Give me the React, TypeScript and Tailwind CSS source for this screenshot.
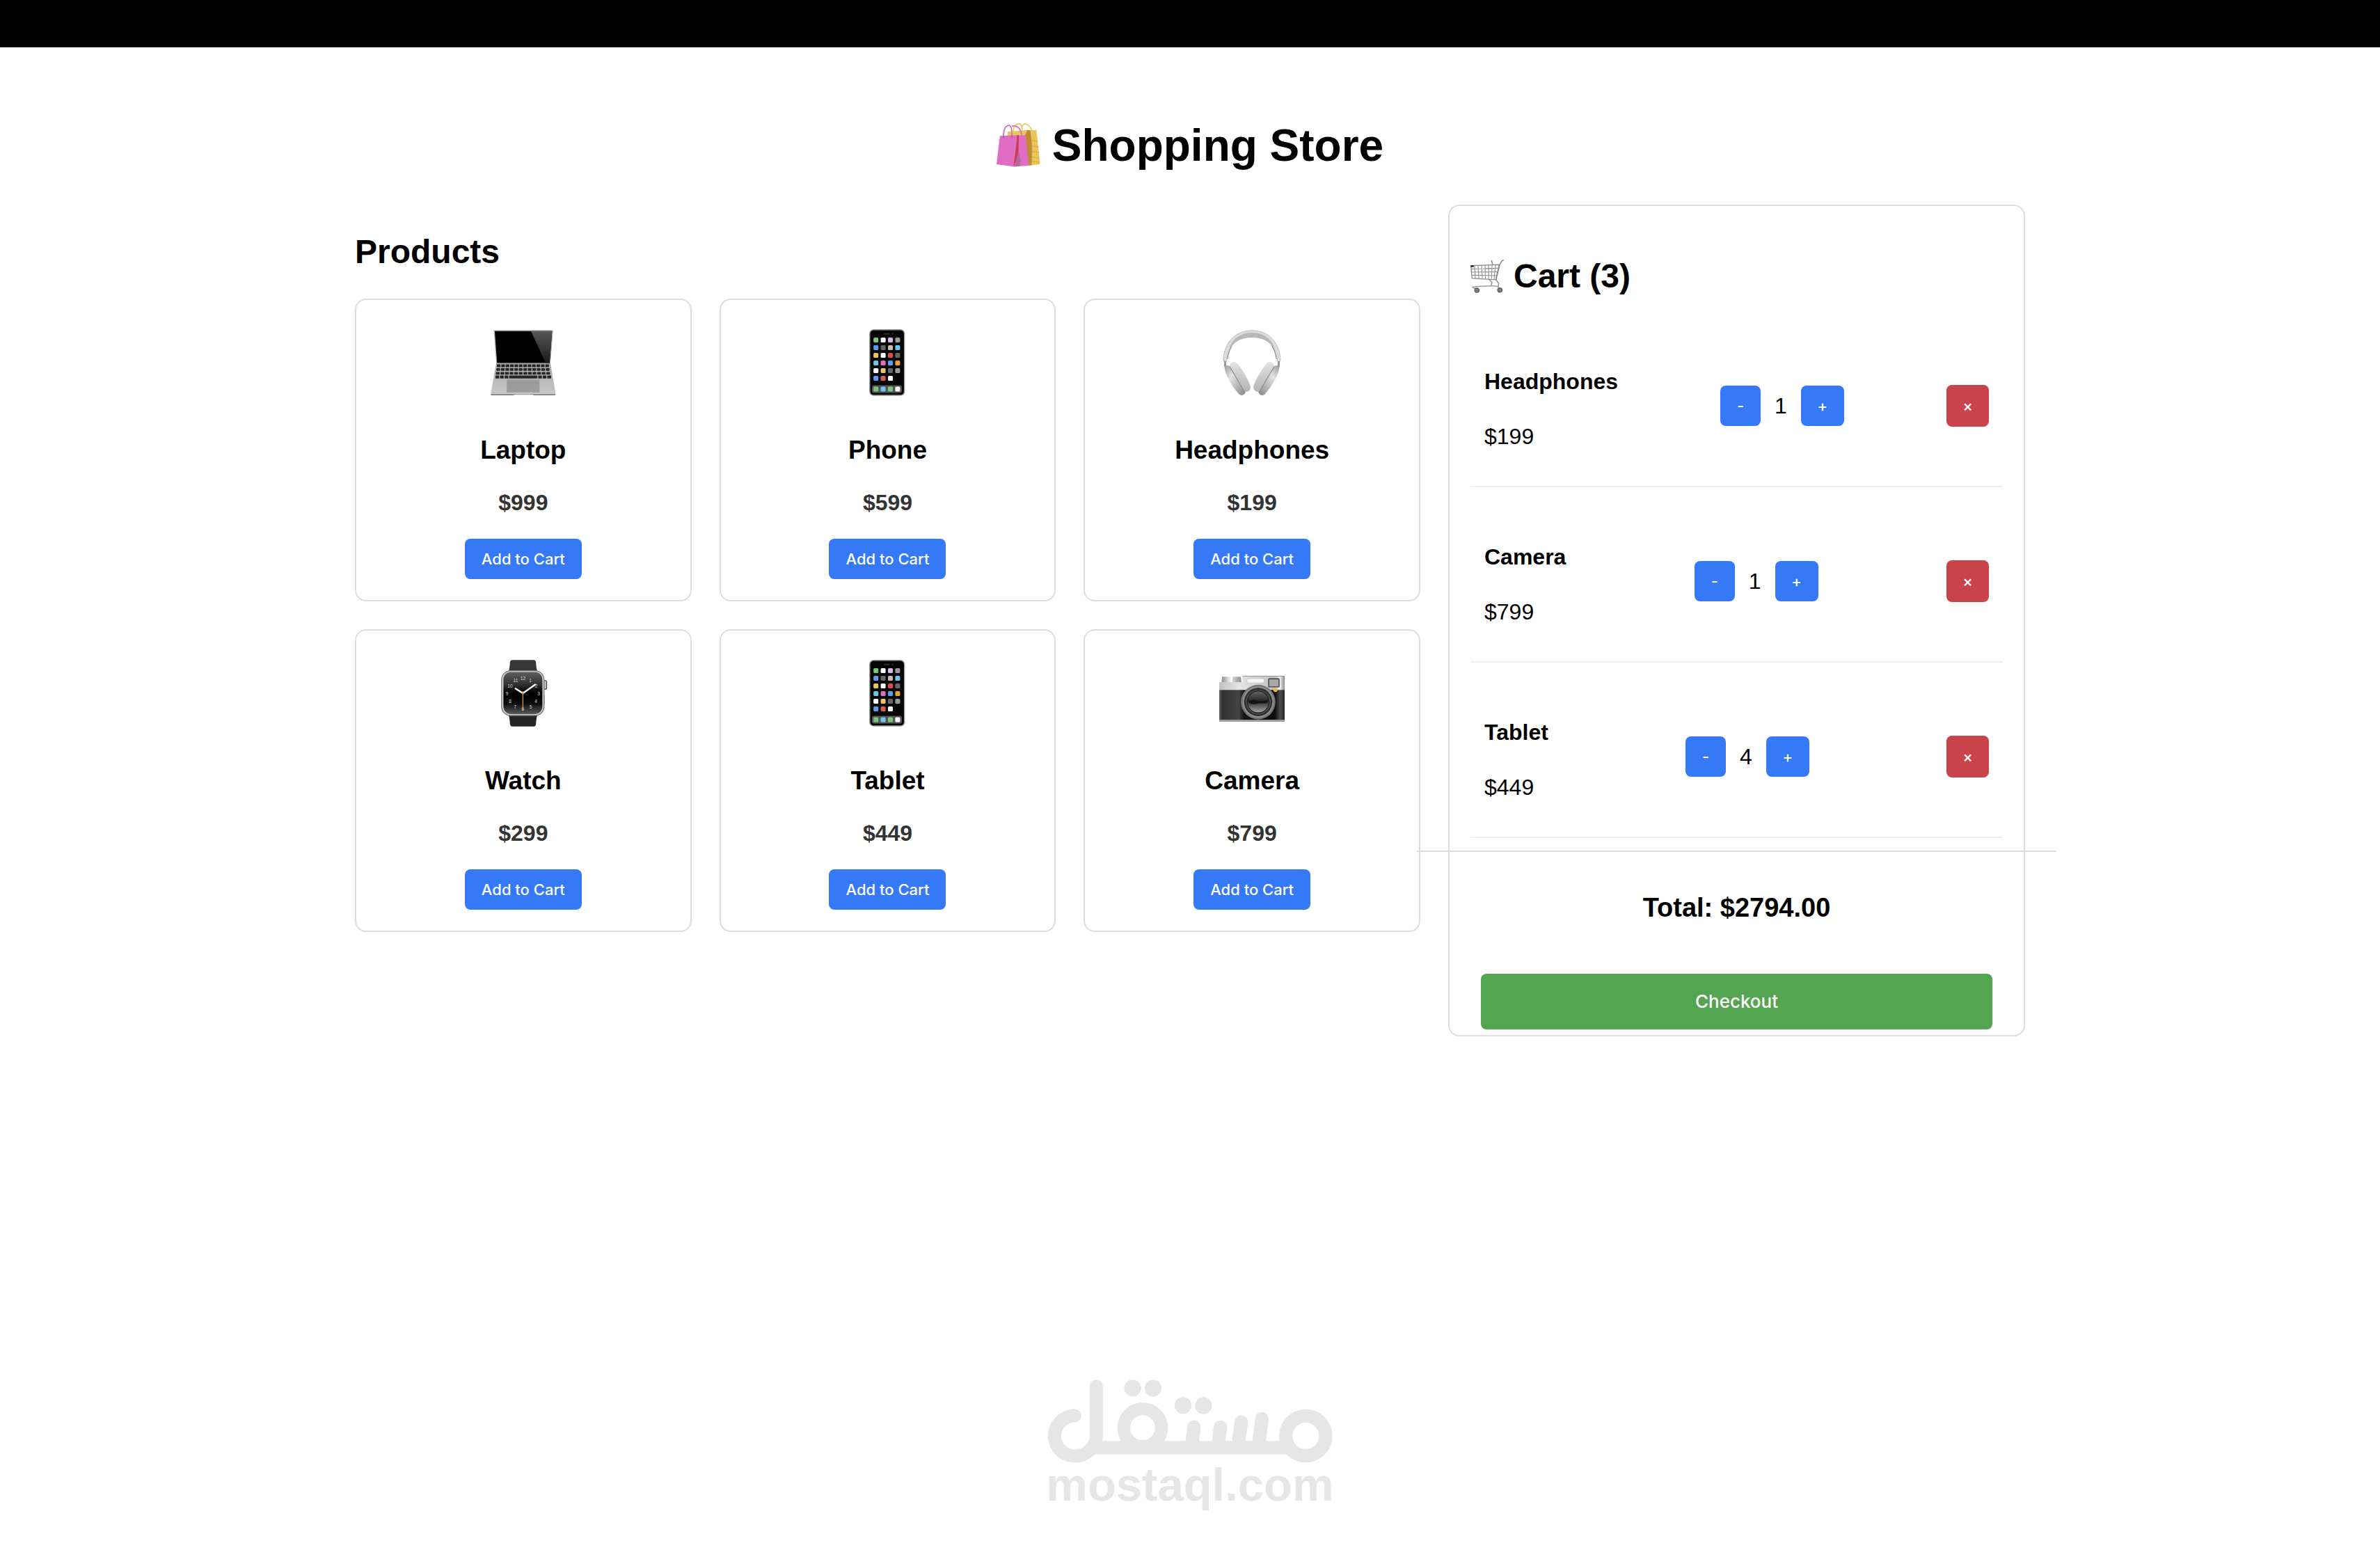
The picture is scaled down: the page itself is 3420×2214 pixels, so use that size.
import { useState, type ReactNode } from "react";

function BagsIcon() {
  return (
    <svg viewBox="0 1 63 64" className="h-16 w-[63px] shrink-0" fill="none" aria-hidden="true">
      <path d="M15.8 13.3 44 10.8 57.4 11.3 62.5 60 46 62 16 40Z" fill="#e9c65a" />
      <path d="M44.3 10.8 48.6 11.2 51 35 50.5 61 45.5 62 41 18Z" fill="#c08a35" />
      <path d="M50.8 26 59.5 27M50.8 34 60.5 35M50.8 42 61.5 43M50.8 50 62 51M50.8 56 62 57" stroke="#c99a3e" strokeWidth="1.3" strokeDasharray="1.5 1.5" />
      <path d="M23.8 13C24.5 6 28 2 32.5 1.8 36 2 36.8 5 36.6 11M36.6 11C36.4 5 37.5 2.3 40.4 2 45 2.3 48.5 6 50.6 11" stroke="#e9c65a" strokeWidth="1.7" />
      <path d="M4.8 19.3 29.7 18.2 41.5 18.5 46.3 61.7 25.7 63.5 0 60Z" fill="#e06cc4" />
      <path d="M29.7 18.2 32 18.2 31.6 42 28 56 24.4 62.5 27.5 40Z" fill="#c8404c" />
      <path d="M31.6 42 35 55 33 62.8 24.4 63.2 28 56Z" fill="#b06a9c" />
      <path d="M9.9 23C9.8 12 12 4.5 17.5 4.2 21 4.4 22.3 8 22 22M22 5.2C31 3 35 10 36.4 19" stroke="#e06cc4" strokeWidth="1.8" />
      <path d="M9.9 19.2v3.6M22 18.6v3.6" stroke="#b44a9c" strokeWidth="1" />
    </svg>
  );
}

function CartIcon() {
  return (
    <svg viewBox="0 0 48 48" className="size-12 shrink-0" fill="none" aria-hidden="true">
      <path d="M.7 8.7 41.3 7.3 36.3 28.9 2.3 26.8Z" stroke="#8c8c8c" strokeWidth="1.3" />
      <path d="M6 8.6 7 27M11 8.4 12 27.3M16 8.3 17 27.6M21 8.1 21.6 27.9M26 8 26.2 28.2M31 7.8 30.2 28.4M36 7.6 34 28.6M1.2 13.4 40 12.4M1.5 18 39 17.6M1.9 22.4 38 23" stroke="#8f8f8f" strokeWidth="1.1" />
      <path d="M30.2.8 32 8M47.8.5 45.4 1.6 42 7.3 36.8 28.8" stroke="#858585" strokeWidth="1.4" />
      <path d="M27 28.5 31 33 29.5 37.5M36.3 28.9 40.5 34 39.7 39.4M2.3 39.8 9 38.6 29.5 37.6 39.7 38.4M4 40.5 9.3 43.5M39.5 39.5 42.3 43.5" stroke="#8c8c8c" strokeWidth="1.4" />
      <rect x=".2" y="8" width="4.6" height="2.8" rx=".6" fill="#26323e" />
      <circle cx="9.3" cy="44" r="2.9" fill="#a5a5a5" stroke="#5d5d5d" strokeWidth="1.8" />
      <circle cx="42.3" cy="43.8" r="2.9" fill="#a5a5a5" stroke="#5d5d5d" strokeWidth="1.8" />
      <circle cx="9.3" cy="44" r=".9" fill="#444" />
      <circle cx="42.3" cy="43.8" r=".9" fill="#444" />
    </svg>
  );
}

function LaptopIcon() {
  const rows = [
    { y: 50.6, x: 10, w: 76 },
    { y: 56, x: 9.3, w: 77.5 },
    { y: 61.4, x: 8.6, w: 79 },
  ];
  return (
    <svg viewBox="0 0 96 96" className="size-24" aria-hidden="true">
      <defs>
        <linearGradient id="laptop-glare" x1="0" y1="0" x2="0" y2="1">
          <stop offset="0" stopColor="#565656" />
          <stop offset="1" stopColor="#1c1c1c" />
        </linearGradient>
        <linearGradient id="laptop-base" x1="0" y1="0" x2="0" y2="1">
          <stop offset="0" stopColor="#a8a8a8" />
          <stop offset="1" stopColor="#c9c9c9" />
        </linearGradient>
      </defs>
      <path d="M5.4 2.5Q5.3 1.3 6.5 1.3H89.7Q90.9 1.3 90.8 2.5L87 49H9.1Z" fill="#b4b4b4" />
      <path d="M7 2.7H89.3L85.8 48.4H10.2Z" fill="#000" />
      <path d="M59 2.7H89.3L85.8 48.4H80Z" fill="url(#laptop-glare)" />
      <path d="M9 49H87L94.4 92.6Q94.6 94.4 93 94.4H2.4Q.9 94.4 1.2 92.6Z" fill="url(#laptop-base)" />
      <path d="M1.3 93.3H94.3Q94.3 95 92.8 95H63L61 93.8H35.5L33.5 95H2.8Q1.2 95 1.3 93.3Z" fill="#808080" />
      {rows.map((row) => (
        <g key={row.y} fill="#262626">
          {Array.from({ length: 12 }, (_, i) => (
            <rect key={i} x={row.x + (row.w / 12) * i} y={row.y} width={row.w / 12 - 1.2} height="3.8" rx=".5" />
          ))}
        </g>
      ))}
      <g fill="#262626">
        <rect x="8" y="66.6" width="5.3" height="4.2" rx=".5" />
        <rect x="14.5" y="66.6" width="5.3" height="4.2" rx=".5" />
        <rect x="21" y="66.6" width="5.5" height="4.2" rx=".5" />
        <rect x="27.7" y="66.6" width="40.5" height="4.2" rx=".5" />
        <rect x="69.4" y="66.6" width="5.3" height="4.2" rx=".5" />
        <rect x="75.9" y="66.6" width="5.3" height="4.2" rx=".5" />
        <rect x="82.4" y="66.6" width="5.6" height="4.2" rx=".5" />
      </g>
      <path d="M24.3 72.6H71.2L71.6 90.8H24Z" fill="#9c9c9c" />
    </svg>
  );
}

const appRows = [
  ["#7cc47c", "#fff", "#d9b8e6", "#999"],
  ["#5a9cf0", "#666", "#c9bdae", "#6cc6f0"],
  ["#e9c65a", "#fff", "#dc4b4b", "#666"],
  ["#6cc6e0", "#e06cc4", "#5a9cf0", "#e0a040"],
  ["#fff", "#e9c65a", "#666", "#999"],
  ["#5a9cf0", "#dc5a4b", "#fff"],
  ["#7cc47c", "#6cc6f0", "#7cc47c", "#fff"],
];
const appRowY = [12, 23, 34, 45, 56, 67, 82.5];

function PhoneIcon() {
  return (
    <svg viewBox="-1 0 96 96" className="size-24" aria-hidden="true">
      <rect x="21.8" y=".8" width="49.8" height="94.2" rx="5.5" fill="#050505" stroke="#9b9b9b" strokeWidth="1.4" />
      <rect x="42" y="5.8" width="9" height="2" rx="1" fill="#2a2a2a" />
      <circle cx="54.5" cy="6.8" r="1.2" fill="#2a2a2a" />
      <rect x="25" y="80.6" width="43" height="11" rx="3" fill="#555" />
      {appRows.map((row, r) =>
        row.map((color, c) => (
          <rect key={`${r}-${c}`} x={27.2 + c * 10.4} y={appRowY[r]} width="7" height="7" rx="1.6" fill={color} />
        )),
      )}
    </svg>
  );
}

function HeadphonesIcon() {
  return (
    <svg viewBox="0 -1 96 96" className="size-24" fill="none" aria-hidden="true">
      <defs>
        <linearGradient id="cup-left" x1="0" y1="0" x2="1" y2="1">
          <stop offset="0" stopColor="#9c9c9c" />
          <stop offset=".35" stopColor="#e2e2e2" />
          <stop offset="1" stopColor="#858585" />
        </linearGradient>
        <linearGradient id="pad" x1="0" y1="0" x2="0" y2="1">
          <stop offset="0" stopColor="#e2e2e2" />
          <stop offset="1" stopColor="#b4b4b4" />
        </linearGradient>
      </defs>
      <path d="M7 45C7 21 22 .8 48 .8S89 21 89 45H84.6C83.6 24 69 9.5 48 9.5S12.4 24 11.6 45Z" fill="#dcdcdc" stroke="#b2b2b2" strokeWidth=".8" />
      <path d="M18 20C25 9.5 35 4 48 4S71 9.5 78 20L80 26C73 16 62 11 48 11S23 16 16 26Z" fill="#b8b8b8" />
      <path d="M12.8 42C14 34 16 28 19 23M83.2 42C82 34 80 28 77 23" stroke="#8e8e8e" strokeWidth="1.2" />
      <path d="M9.5 45v8M86.5 45v8" stroke="#999" strokeWidth="3" />
      <path d="M8.6 54C8 50.6 13 49 17 53L39 86C40 91 34 96.5 29.5 92.5 20 82 10 66 8.6 54Z" fill="url(#cup-left)" />
      <g transform="translate(96 0) scale(-1 1)">
        <path d="M8.6 54C8 50.6 13 49 17 53L39 86C40 91 34 96.5 29.5 92.5 20 82 10 66 8.6 54Z" fill="url(#cup-left)" />
      </g>
      <path d="M16.4 53C15.4 48 20 44.5 25 46.5 32 53 43 71 45.8 81 46.5 87 42 89.5 37.5 88.6Z" fill="url(#pad)" />
      <path d="M79.6 53C80.6 48 76 44.5 71 46.5 64 53 53 71 50.2 81 49.5 87 54 89.5 58.5 88.6Z" fill="url(#pad)" />
      <path d="M15.8 52.4 37.5 89M80.2 52.4 58.5 89" stroke="#8a8a8a" strokeWidth="1.1" />
    </svg>
  );
}

const watchNumerals: [string, number, number][] = [
  ["12", 47.4, 26.7], ["1", 58, 29.3], ["2", 66.6, 37.7], ["3", 70, 48.7], ["4", 66, 60], ["5", 58.7, 67.7],
  ["6", 47.4, 70.7], ["7", 36.3, 67.7], ["8", 29, 60], ["9", 24.6, 48.7], ["10", 29, 37.7], ["11", 37, 29.3],
];

function WatchIcon() {
  return (
    <svg viewBox="0 0 96 96" className="size-24" aria-hidden="true">
      <defs>
        <linearGradient id="watch-face" x1="0" y1="0" x2="0" y2="1">
          <stop offset="0" stopColor="#606060" />
          <stop offset=".3" stopColor="#303030" />
          <stop offset=".5" stopColor="#000" />
          <stop offset=".75" stopColor="#0c0c0c" />
          <stop offset="1" stopColor="#5c5c5c" />
        </linearGradient>
      </defs>
      <path d="M27 16Q28.4 12 28.8 4 29.2.3 32 .3H63Q65.8.3 66.2 4 66.6 12 68 16Z" fill="#363636" />
      <path d="M27 80Q28.4 84 28.8 92 29.2 95.7 32 95.7H63Q65.8 95.7 66.2 92 66.6 84 68 80Z" fill="#242424" />
      <rect x="75.5" y="29.8" width="6" height="12.4" rx="2" fill="#c4c4c4" stroke="#444" strokeWidth="1.3" />
      <rect x="76.4" y="50" width="2.2" height="14" rx="1" fill="#888" />
      <rect x="16.8" y="15.6" width="61" height="64.4" rx="13" fill="#d2d2d2" stroke="#777" strokeWidth="1.3" />
      <rect x="19.4" y="17.4" width="56" height="60.6" rx="11" fill="url(#watch-face)" />
      <g fill="#d8d8d8" fontFamily="'Liberation Sans', sans-serif" fontSize="6.6" textAnchor="middle">
        {watchNumerals.map(([label, x, y]) => (
          <text key={label} x={x} y={y + 2.3}>{label}</text>
        ))}
      </g>
      <path d="M47.4 48 36.8 41.3M47.4 48 65.2 35.5" stroke="#fff" strokeWidth="2.4" strokeLinecap="round" />
      <path d="M47.4 45V72" stroke="#e0a030" strokeWidth="1.2" />
      <circle cx="47.4" cy="48" r="1.5" fill="#e0a030" />
    </svg>
  );
}

function CameraIcon() {
  return (
    <svg viewBox="0 0 96 96" className="size-24" aria-hidden="true">
      <defs>
        <linearGradient id="cam-top" x1="0" y1="0" x2="1" y2="0">
          <stop offset="0" stopColor="#c0c0c0" />
          <stop offset=".3" stopColor="#e4e4e4" />
          <stop offset=".85" stopColor="#c2c2c2" />
          <stop offset=".93" stopColor="#ececec" />
          <stop offset="1" stopColor="#8a8a8a" />
        </linearGradient>
        <linearGradient id="cam-dial" x1="0" y1="0" x2="1" y2="0">
          <stop offset="0" stopColor="#8c8c8c" />
          <stop offset=".4" stopColor="#ececec" />
          <stop offset="1" stopColor="#8c8c8c" />
        </linearGradient>
        <linearGradient id="cam-body" x1="0" y1="0" x2="1" y2="0">
          <stop offset="0" stopColor="#606060" />
          <stop offset=".05" stopColor="#323232" />
          <stop offset=".3" stopColor="#444" />
          <stop offset=".38" stopColor="#141414" />
          <stop offset=".85" stopColor="#0c0c0c" />
          <stop offset=".93" stopColor="#4c4c4c" />
          <stop offset="1" stopColor="#242424" />
        </linearGradient>
        <linearGradient id="cam-glass" x1="0" y1="0" x2="0" y2="1">
          <stop offset="0" stopColor="#626262" />
          <stop offset=".45" stopColor="#282828" />
          <stop offset="1" stopColor="#a4a4a4" />
        </linearGradient>
      </defs>
      <path d="M5 24.2H17V32.5H4.4ZM20.6 24.2H32L33 32.5H19.5Z" fill="url(#cam-dial)" />
      <path d="M1 32H34.5V23H95V44H1Z" fill="url(#cam-top)" />
      <path d="M34.5 23.4H95" stroke="#8a8a8a" strokeWidth=".9" />
      <rect x="1" y="43.3" width="94" height="43" fill="url(#cam-body)" />
      <rect x="1" y="86" width="94" height="3" fill="#9e9e9e" />
      <rect x="40.7" y="26.7" width="24.8" height="6.6" rx="2" fill="#f4f4f4" stroke="#b0b0b0" strokeWidth=".6" />
      <rect x="72" y="27.3" width="15" height="11.6" rx="1" fill="#a8a8a8" stroke="#3e3e3e" strokeWidth="1.4" />
      <circle cx="57" cy="60.6" r="24.8" fill="#747474" />
      <circle cx="57" cy="60.6" r="22.6" fill="#8e8e8e" />
      <circle cx="57" cy="60.6" r="20.3" fill="#303030" />
      <circle cx="57" cy="60.6" r="17" fill="#1e1e1e" stroke="#555" strokeWidth="1.4" />
      <circle cx="57" cy="60.6" r="15" fill="url(#cam-glass)" />
      <path d="M43 60Q49 56 56 58.5T71 57Q71 63 65 62.5T53 63.5 43 60Z" fill="#141414" />
      <circle cx="81.7" cy="43.3" r="3" fill="#e9bb45" />
    </svg>
  );
}

function Watermark() {
  return (
    <footer className="mt-auto flex flex-col items-center pb-[50px] text-[#e6e6e6]">
      <svg viewBox="76 64 1227 360" className="h-[120px] w-[409px]" fill="none" stroke="currentColor" strokeLinecap="round" role="img" aria-label="مستقل">
        <circle cx="1187" cy="307" r="86" strokeWidth="58" />
        <circle cx="484" cy="272" r="81.5" strokeWidth="55" />
        <path d="M270 358H1125" strokeWidth="58" strokeLinecap="butt" />
        <path d="M284 93V307A93 87 0 0 1 191 394 87 87 0 0 1 104 307 87 87 0 0 1 191 220" strokeWidth="57" />
        <path d="M705 269 696 345M819 269 810 345M909 247 896 345M998 233 984 345" strokeWidth="58" />
        <g fill="currentColor" stroke="none">
          <circle cx="441" cy="101" r="36.5" />
          <circle cx="529" cy="101" r="36.5" />
          <circle cx="658" cy="176" r="36.5" />
          <circle cx="746" cy="176" r="36.5" />
        </g>
      </svg>
      <div className="text-[67px] font-bold leading-[62px]">mostaql.com</div>
    </footer>
  );
}

type Product = { name: string; price: number; icon: ReactNode };

const products: Product[] = [
  { name: "Laptop", price: 999, icon: <LaptopIcon /> },
  { name: "Phone", price: 599, icon: <PhoneIcon /> },
  { name: "Headphones", price: 199, icon: <HeadphonesIcon /> },
  { name: "Watch", price: 299, icon: <WatchIcon /> },
  { name: "Tablet", price: 449, icon: <PhoneIcon /> },
  { name: "Camera", price: 799, icon: <CameraIcon /> },
];

type Line = { name: string; price: number; qty: number };

export default function App() {
  const [cart, setCart] = useState<Line[]>([
    { name: "Headphones", price: 199, qty: 1 },
    { name: "Camera", price: 799, qty: 1 },
    { name: "Tablet", price: 449, qty: 4 },
  ]);

  const change = (name: string, by: number) =>
    setCart((lines) => lines.map((l) => (l.name === name ? { ...l, qty: Math.max(1, l.qty + by) } : l)));
  const remove = (name: string) => setCart((lines) => lines.filter((l) => l.name !== name));
  const add = (p: Product) =>
    cart.some((l) => l.name === p.name)
      ? change(p.name, 1)
      : setCart((lines) => [...lines, { name: p.name, price: p.price, qty: 1 }]);
  const total = cart.reduce((sum, l) => sum + l.price * l.qty, 0);

  return (
    <div className="flex min-h-screen flex-col bg-white font-['Liberation_Sans',Arial,sans-serif] text-[32px] leading-[37px] text-black">
      <div className="h-[68px] shrink-0 bg-black" />
      <h1 className="mt-[105px] flex items-center justify-center gap-[17px] text-[64px] font-bold leading-[72px]">
        <BagsIcon />
        Shopping Store
      </h1>

      <main className="mx-auto mt-[49px] grid w-full max-w-[2400px] grid-cols-[1531fr_829fr] items-start gap-10">
        <section>
          <h2 className="mb-[39px] mt-10 text-[48px] font-bold leading-[56px]">Products</h2>
          <div className="grid grid-cols-3 gap-10">
            {products.map((p) => (
              <article key={p.name} className="flex flex-col items-center rounded-2xl border-2 border-[#ddd] px-[30px] pb-[30px] pt-[42px]">
                {p.icon}
                <h3 className="mt-14 text-[37px] font-bold leading-[43px]">{p.name}</h3>
                <p className="mt-9 font-bold text-[#333]">${p.price}</p>
                <button
                  type="button"
                  onClick={() => add(p)}
                  className="mt-[33px] h-[58px] w-[168px] rounded-lg bg-[#3579f7] font-[Inter,sans-serif] text-[22px] font-medium leading-[26px] text-white"
                >
                  Add to Cart
                </button>
              </article>
            ))}
          </div>
        </section>

        <aside className="rounded-2xl border-2 border-[#ddd] px-[30px] pb-2 pt-[73px]">
          <h2 className="flex items-center gap-3.5 text-[48px] font-bold leading-[56px]">
            <CartIcon />
            Cart ({cart.length})
          </h2>
          <ul className="mt-[43px] flex flex-col gap-5">
            {cart.map((l) => (
              <li key={l.name} className="flex items-center justify-between border-b-2 border-[#eee] p-5">
                <div className="pb-8 pt-[42px]">
                  <h4 className="mb-[42px] font-bold">{l.name}</h4>
                  <p>${l.price}</p>
                </div>
                <div className="flex items-center gap-5">
                  <button
                    type="button"
                    aria-label={`Decrease ${l.name}`}
                    onClick={() => change(l.name, -1)}
                    className="h-[58px] w-[58px] rounded-lg bg-[#3579f7] font-[Inter,sans-serif] text-[22px] font-medium leading-[26px] text-white"
                  >
                    -
                  </button>
                  <span>{l.qty}</span>
                  <button
                    type="button"
                    aria-label={`Increase ${l.name}`}
                    onClick={() => change(l.name, 1)}
                    className="h-[58px] w-[62px] rounded-lg bg-[#3579f7] font-[Inter,sans-serif] text-[22px] font-medium leading-[26px] text-white"
                  >
                    +
                  </button>
                </div>
                <button
                  type="button"
                  aria-label={`Remove ${l.name}`}
                  onClick={() => remove(l.name)}
                  className="h-[60px] w-[61px] rounded-lg bg-[#c9444a] font-[Inter,sans-serif] text-[22px] font-medium leading-[26px] text-white"
                >
                  ×
                </button>
              </li>
            ))}
          </ul>
          <div className="-mx-[77px] mt-[18px] flex flex-col items-center border-t-2 border-[#ddd] pt-[58px]">
            <h3 className="text-[38px] font-bold leading-[44px]">Total: ${total.toFixed(2)}</h3>
            <button
              type="button"
              className="mt-[73px] h-20 w-4/5 rounded-lg bg-[#54a551] font-[Inter,sans-serif] text-[26px] font-medium leading-[32px] text-white"
            >
              Checkout
            </button>
          </div>
        </aside>
      </main>

      <Watermark />
    </div>
  );
}
